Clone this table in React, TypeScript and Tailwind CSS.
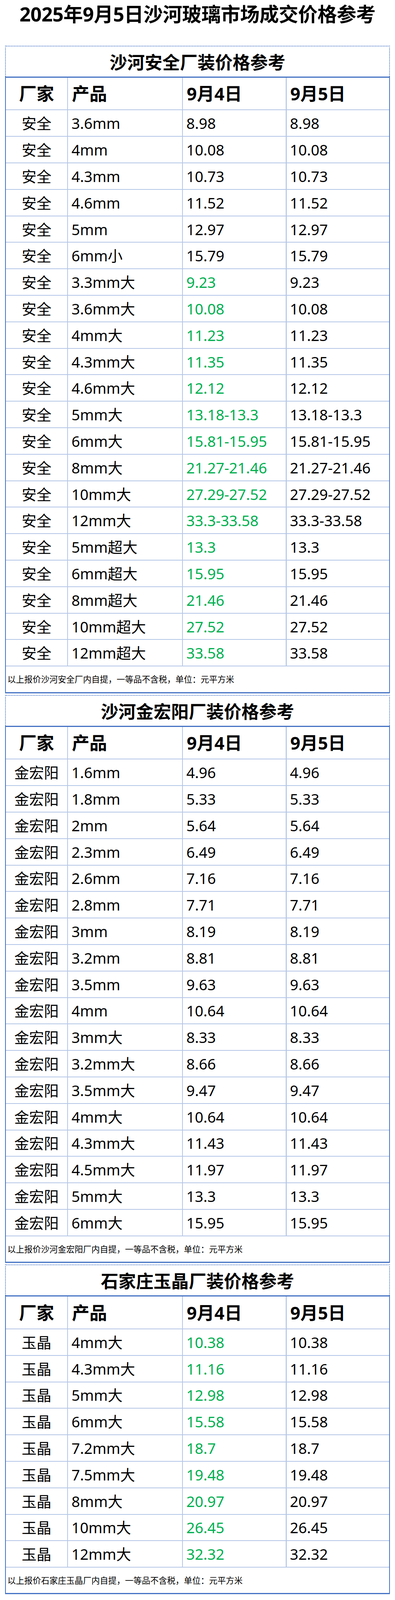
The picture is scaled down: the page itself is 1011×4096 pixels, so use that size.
import React from "react";

type Row = [string, string, string];

const anquan: Row[] = [
  ["3.6mm", "8.98", "8.98"],
  ["4mm", "10.08", "10.08"],
  ["4.3mm", "10.73", "10.73"],
  ["4.6mm", "11.52", "11.52"],
  ["5mm", "12.97", "12.97"],
  ["6mm小", "15.79", "15.79"],
  ["3.3mm大", "9.23", "9.23"],
  ["3.6mm大", "10.08", "10.08"],
  ["4mm大", "11.23", "11.23"],
  ["4.3mm大", "11.35", "11.35"],
  ["4.6mm大", "12.12", "12.12"],
  ["5mm大", "13.18-13.3", "13.18-13.3"],
  ["6mm大", "15.81-15.95", "15.81-15.95"],
  ["8mm大", "21.27-21.46", "21.27-21.46"],
  ["10mm大", "27.29-27.52", "27.29-27.52"],
  ["12mm大", "33.3-33.58", "33.3-33.58"],
  ["5mm超大", "13.3", "13.3"],
  ["6mm超大", "15.95", "15.95"],
  ["8mm超大", "21.46", "21.46"],
  ["10mm超大", "27.52", "27.52"],
  ["12mm超大", "33.58", "33.58"],
];

const jinhongyang: Row[] = [
  ["1.6mm", "4.96", "4.96"],
  ["1.8mm", "5.33", "5.33"],
  ["2mm", "5.64", "5.64"],
  ["2.3mm", "6.49", "6.49"],
  ["2.6mm", "7.16", "7.16"],
  ["2.8mm", "7.71", "7.71"],
  ["3mm", "8.19", "8.19"],
  ["3.2mm", "8.81", "8.81"],
  ["3.5mm", "9.63", "9.63"],
  ["4mm", "10.64", "10.64"],
  ["3mm大", "8.33", "8.33"],
  ["3.2mm大", "8.66", "8.66"],
  ["3.5mm大", "9.47", "9.47"],
  ["4mm大", "10.64", "10.64"],
  ["4.3mm大", "11.43", "11.43"],
  ["4.5mm大", "11.97", "11.97"],
  ["5mm大", "13.3", "13.3"],
  ["6mm大", "15.95", "15.95"],
];

const yujing: Row[] = [
  ["4mm大", "10.38", "10.38"],
  ["4.3mm大", "11.16", "11.16"],
  ["5mm大", "12.98", "12.98"],
  ["6mm大", "15.58", "15.58"],
  ["7.2mm大", "18.7", "18.7"],
  ["7.5mm大", "19.48", "19.48"],
  ["8mm大", "20.97", "20.97"],
  ["10mm大", "26.45", "26.45"],
  ["12mm大", "32.32", "32.32"],
];

function Section({
  title,
  vendor,
  rows,
  greenFrom,
  note,
}: {
  title: string;
  vendor: string;
  rows: Row[];
  greenFrom: number;
  note: string;
}) {
  return (
    <div className="mb-[4px]">
      <div className="h-[79.4px] border-t-2 border-x-2 border-dotted border-[#4472c4] flex items-center justify-center pt-[4px]">
        <span className="text-[45px] font-bold leading-none text-black">{title}</span>
      </div>
      <div className="border-x-2 border-t-[3px] border-b-[3px] border-solid border-[#4472c4]">
        <div className="grid grid-cols-[159px_294px_265px_1fr] h-[83.5px] border-b-2 border-[#b4c6e7] text-[45px] font-bold leading-none">
          <div className="border-r-2 border-[#b4c6e7] flex items-center justify-center">厂家</div>
          <div className="border-r-2 border-[#b4c6e7] flex items-center pl-[10px]">产品</div>
          <div className="border-r border-[#4472c4] flex items-center pl-[10px]">9月4日</div>
          <div className="flex items-center pl-[10px]">9月5日</div>
        </div>
        {rows.map((r, i) => (
          <div
            key={i}
            className="grid grid-cols-[159px_294px_265px_1fr] h-[67.8px] border-b-2 border-[#b4c6e7] text-[38px] leading-none text-black"
          >
            <div className="border-r-2 border-[#b4c6e7] flex items-center justify-center">{vendor}</div>
            <div className="border-r-2 border-[#b4c6e7] flex items-center pl-[9px]">{r[0]}</div>
            <div
              className={
                "border-r border-[#4472c4] flex items-center pl-[9px] " +
                (i >= greenFrom ? "text-[#00b050]" : "text-black")
              }
            >
              {r[1]}
            </div>
            <div className="flex items-center pl-[9px]">{r[2]}</div>
          </div>
        ))}
        <div className="h-[65.3px] flex items-center pl-[4px] text-[21.5px] leading-none text-black">{note}</div>
      </div>
    </div>
  );
}

export default function App() {
  return (
    <div className="w-[1011px] bg-white font-['Noto_Sans','Noto_Sans_CJK_SC',sans-serif] text-black">
      <div className="h-[116.6px] flex justify-center pt-[11px]">
        <h1 className="text-[50px] font-bold leading-none tracking-[-0.5px]">2025年9月5日沙河玻璃市场成交价格参考</h1>
      </div>
      <div className="px-[13px]">
        <Section
          title="沙河安全厂装价格参考"
          vendor="安全"
          rows={anquan}
          greenFrom={6}
          note="以上报价沙河安全厂内自提，一等品不含税，单位：元平方米"
        />
        <Section
          title="沙河金宏阳厂装价格参考"
          vendor="金宏阳"
          rows={jinhongyang}
          greenFrom={999}
          note="以上报价沙河金宏阳厂内自提，一等品不含税，单位：元平方米"
        />
        <Section
          title="石家庄玉晶厂装价格参考"
          vendor="玉晶"
          rows={yujing}
          greenFrom={0}
          note="以上报价石家庄玉晶厂内自提，一等品不含税，单位：元平方米"
        />
      </div>
    </div>
  );
}
